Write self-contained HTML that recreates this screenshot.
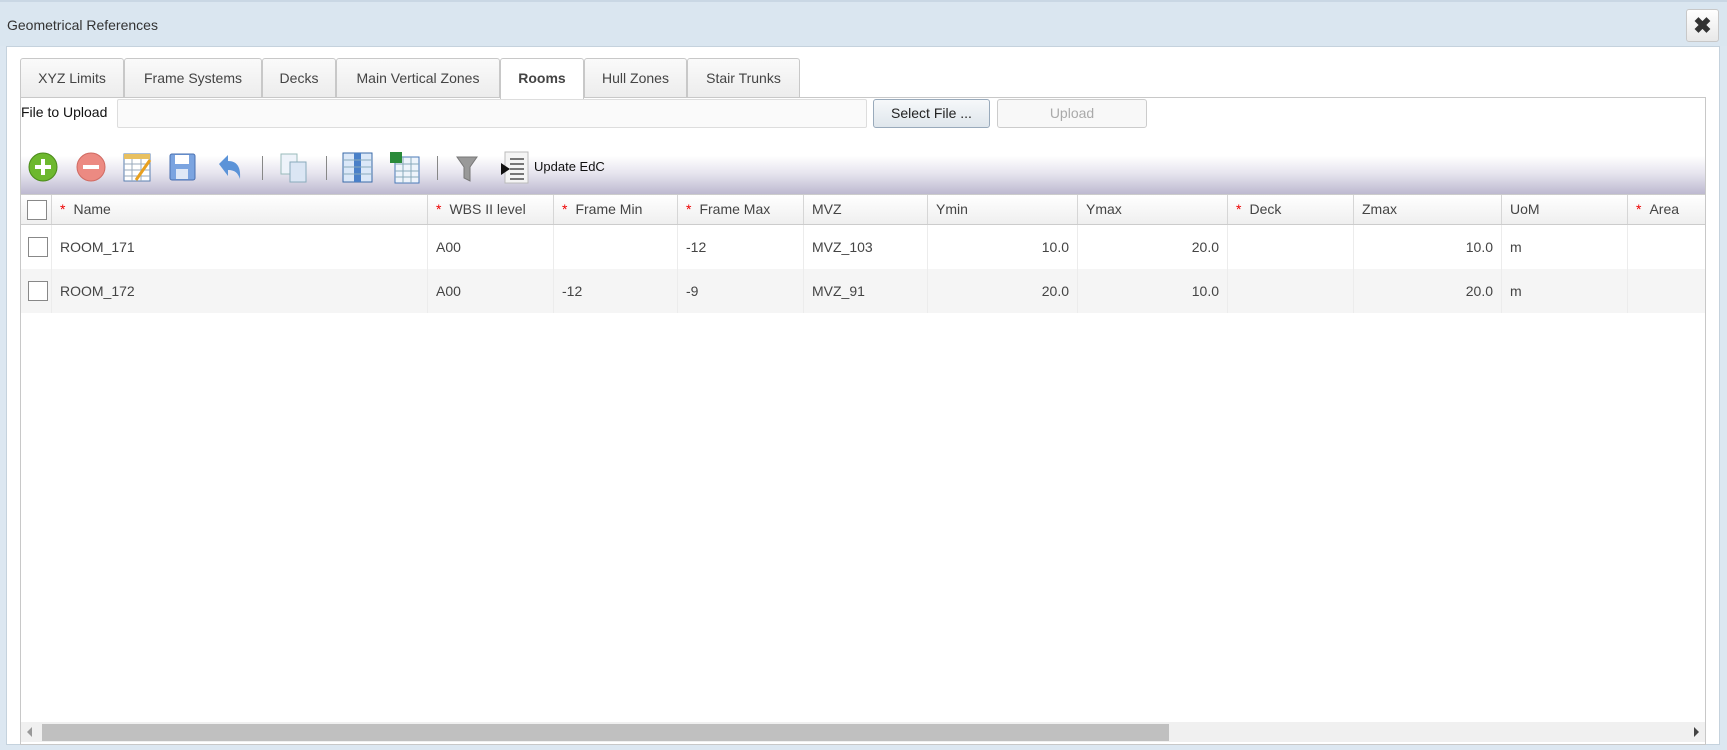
<!DOCTYPE html>
<html><head><style>
*{box-sizing:border-box;margin:0;padding:0}
body{width:1727px;height:750px;background:#dce7f1;font-family:"Liberation Sans",sans-serif;font-size:14px;color:#333;position:relative;overflow:hidden}
.abs{position:absolute}
.title{left:0;top:0;width:1727px;height:46px;background:#dae6f0;border-top:2px solid #c9d7e4}
.title span{position:absolute;left:7px;top:15px;font-size:14px;color:#333}
.close{left:1686px;top:9px;width:33px;height:33px;border:1px solid #c8c8c8;border-radius:3px;background:linear-gradient(#fff,#e8e8e8);text-align:center;font-size:22px;font-weight:bold;line-height:31px;color:#333}
.body{left:6px;top:46px;width:1714px;height:699px;background:#fff;border:1px solid #c5d2dd}
.tab{top:58px;height:40px;border:1px solid #c8c8c8;border-bottom:none;border-radius:3px 3px 0 0;background:linear-gradient(#fafafa,#ececec);text-align:center;line-height:38px;color:#444;font-size:14px}
.tab.act{background:#fff;font-weight:bold;height:41px;z-index:2}
.panel{left:20px;top:97px;width:1686px;height:648px;border:1px solid #c8c8c8;background:#fff}
.inp{top:99px;height:29px;border:1px solid #ddd;border-radius:2px;background:#fafafa}
.btn{top:99px;height:29px;border:1px solid #aab;border-radius:3px;text-align:center;line-height:27px;font-size:14px}
.tb{left:21px;top:143px;width:1684px;height:51px;background:linear-gradient(#fff 0%,#fff 25%,#e6e4ee 60%,#bdb9d0 100%)}
.sep{top:156px;width:1px;height:24px;background:#888}
.hdr{left:21px;top:194px;width:1684px;height:31px;background:linear-gradient(#fff,#efefef);border-top:1px solid #ccc;border-bottom:1px solid #ccc}
.c{position:absolute;top:0;height:100%;border-left:1px solid #d6d6d6;padding-left:8px;line-height:29px;color:#444;white-space:nowrap}
.r{left:21px;width:1684px;height:44px}
.r .c{line-height:44px;border-left:1px solid #ececec}
.star{color:#e00;margin-right:8px}
.cb{position:absolute;left:7px;width:20px;height:20px;border:1px solid #888;background:#fff}
.num{text-align:right;padding-right:8px}
</style></head><body>
<div class="abs title"><span>Geometrical References</span></div>
<div class="abs close">✖</div>
<div class="abs body"></div>
<div class="abs tab" style="left:20px;width:104px">XYZ Limits</div>
<div class="abs tab" style="left:124px;width:138px">Frame Systems</div>
<div class="abs tab" style="left:262px;width:74px">Decks</div>
<div class="abs tab" style="left:336px;width:164px">Main Vertical Zones</div>
<div class="abs tab act" style="left:500px;width:84px">Rooms</div>
<div class="abs tab" style="left:584px;width:103px">Hull Zones</div>
<div class="abs tab" style="left:687px;width:113px">Stair Trunks</div>
<div class="abs panel"></div>
<div class="abs" style="left:21px;top:104px;color:#111">File to Upload</div>
<div class="abs inp" style="left:117px;width:750px"></div>
<div class="abs btn" style="left:873px;width:117px;background:linear-gradient(#f6f8fa,#dfe6ec);border-color:#9ab;color:#222">Select File ...</div>
<div class="abs btn" style="left:997px;width:150px;background:#f8f8f8;border-color:#ccc;color:#aaa">Upload</div>
<div class="abs tb"></div>
<svg class="abs" style="left:28px;top:152px" width="32" height="32"><circle cx="15" cy="15" r="14" fill="#6db82e" stroke="#4a8a1a"/><path d="M15 7v16M7 15h16" stroke="#fff" stroke-width="4"/></svg>
<svg class="abs" style="left:76px;top:152px" width="32" height="32"><circle cx="15" cy="15" r="14" fill="#ec8a82" stroke="#d06a62"/><path d="M7 15h16" stroke="#fff" stroke-width="4"/></svg>
<svg class="abs" style="left:122px;top:152px" width="32" height="32"><rect x="2" y="2" width="26" height="27" fill="#fff" stroke="#5a7fb0"/><rect x="2" y="2" width="26" height="5" fill="#e8c060"/><path d="M2 12h26M2 18h26M2 24h26M10 7v22M19 7v22" stroke="#9ab" /><path d="M28 8L14 28" stroke="#e8a020" stroke-width="3"/></svg>
<svg class="abs" style="left:169px;top:153px" width="28" height="28"><rect x="1" y="1" width="25" height="26" rx="2" fill="#7ba4e0" stroke="#4a70b0"/><rect x="6" y="2" width="14" height="9" fill="#fff"/><rect x="7" y="16" width="12" height="10" fill="#dfe8f6"/></svg>
<svg class="abs" style="left:214px;top:152px" width="30" height="30"><path d="M5 12L14 3v6c9 0 13 6 12 18-2-6-5-9-12-9v6z" fill="#5b93d8"/></svg>
<div class="abs sep" style="left:262px"></div>
<svg class="abs" style="left:278px;top:152px" width="32" height="32"><rect x="3" y="2" width="16" height="20" fill="#eef3fa" stroke="#9bb"/><rect x="12" y="10" width="16" height="20" fill="#dbe6f4" stroke="#8ab"/></svg>
<div class="abs sep" style="left:326px"></div>
<svg class="abs" style="left:342px;top:152px" width="32" height="32"><rect x="1" y="1" width="29" height="29" fill="#dbe8f8" stroke="#3a6aa8"/><rect x="12" y="1" width="7" height="29" fill="#4a80c8"/><path d="M1 8h29M1 15h29M1 22h29" stroke="#8ab"/></svg>
<svg class="abs" style="left:389px;top:151px" width="32" height="34"><rect x="6" y="6" width="24" height="26" fill="#eef4fb" stroke="#4a7ab8"/><path d="M6 13h24M6 20h24M6 26h24M14 6v26M22 6v26" stroke="#8ab"/><rect x="1" y="1" width="12" height="11" fill="#2a8a3a"/></svg>
<div class="abs sep" style="left:437px"></div>
<svg class="abs" style="left:455px;top:155px" width="26" height="28"><path d="M2 2h20l-7 10v14l-6-3V12z" fill="#999" stroke="#777"/></svg>
<svg class="abs" style="left:500px;top:151px" width="30" height="34"><rect x="5" y="1" width="23" height="31" fill="#f4f4f4" stroke="#bbb"/><path d="M10 8h14M10 13h14M10 18h14M10 23h14M10 28h14" stroke="#777" stroke-width="2"/><path d="M1 12l9 6-9 6z" fill="#111"/></svg>
<div class="abs" style="left:534px;top:159px;font-size:13px;color:#111">Update EdC</div>
<div class="abs hdr">
<div class="c" style="left:0;width:30px;border-left:none"><div class="cb" style="top:5px;left:6px"></div></div>
<div class="c" style="left:30px"><span class="star">*</span>Name</div>
<div class="c" style="left:406px"><span class="star">*</span>WBS II level</div>
<div class="c" style="left:532px"><span class="star">*</span>Frame Min</div>
<div class="c" style="left:656px"><span class="star">*</span>Frame Max</div>
<div class="c" style="left:782px">MVZ</div>
<div class="c" style="left:906px">Ymin</div>
<div class="c" style="left:1056px">Ymax</div>
<div class="c" style="left:1206px"><span class="star">*</span>Deck</div>
<div class="c" style="left:1332px">Zmax</div>
<div class="c" style="left:1480px">UoM</div>
<div class="c" style="left:1606px"><span class="star">*</span>Area</div>
</div>
<div class="abs r" style="top:225px;background:#fff">
<div class="cb" style="top:12px"></div>
<div class="c" style="left:30px">ROOM_171</div>
<div class="c" style="left:406px">A00</div>
<div class="c" style="left:532px"></div>
<div class="c" style="left:656px">-12</div>
<div class="c" style="left:782px">MVZ_103</div>
<div class="c num" style="left:906px;width:150px">10.0</div>
<div class="c num" style="left:1056px;width:150px">20.0</div>
<div class="c" style="left:1206px"></div>
<div class="c num" style="left:1332px;width:148px">10.0</div>
<div class="c" style="left:1480px">m</div>
<div class="c" style="left:1606px"></div>
</div>
<div class="abs r" style="top:269px;background:#f5f5f5">
<div class="cb" style="top:12px"></div>
<div class="c" style="left:30px">ROOM_172</div>
<div class="c" style="left:406px">A00</div>
<div class="c" style="left:532px">-12</div>
<div class="c" style="left:656px">-9</div>
<div class="c" style="left:782px">MVZ_91</div>
<div class="c num" style="left:906px;width:150px">20.0</div>
<div class="c num" style="left:1056px;width:150px">10.0</div>
<div class="c" style="left:1206px"></div>
<div class="c num" style="left:1332px;width:148px">20.0</div>
<div class="c" style="left:1480px">m</div>
<div class="c" style="left:1606px"></div>
</div>
<div class="abs" style="left:21px;top:722px;width:1684px;height:20px;background:#f0f0f0"></div>
<div class="abs" style="left:42px;top:724px;width:1127px;height:17px;background:#c0c0c0"></div>
<svg class="abs" style="left:26px;top:726px" width="8" height="12"><path d="M6 1L1 6l5 5z" fill="#999"/></svg>
<svg class="abs" style="left:1692px;top:726px" width="8" height="12"><path d="M2 1l5 5-5 5z" fill="#444"/></svg>
</body></html>
